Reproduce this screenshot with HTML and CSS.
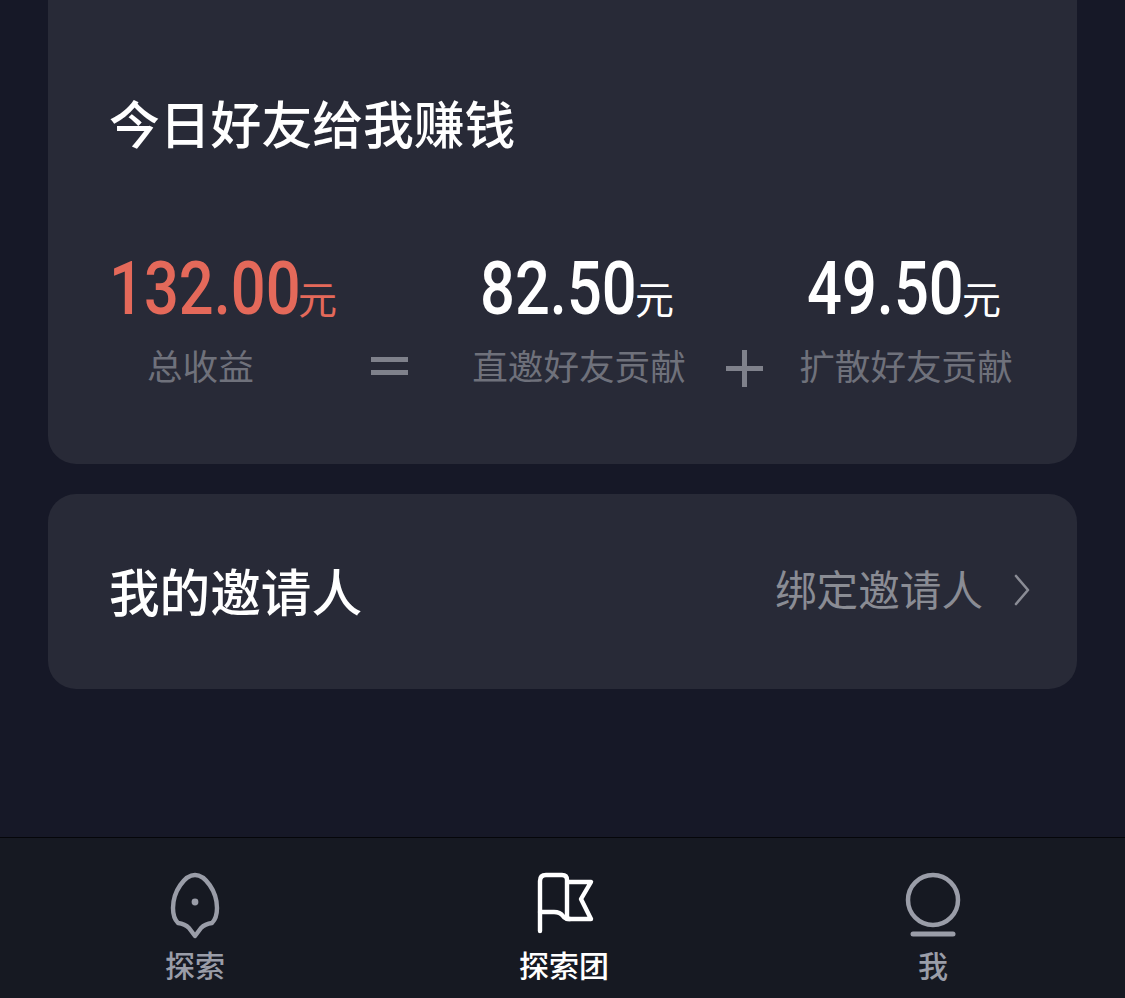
FILE: index.html
```html
<!DOCTYPE html>
<html lang="zh-CN">
<head>
    <meta charset="UTF-8">
    <meta name="viewport" content="width=device-width, initial-scale=1.0">
    <title>探索团</title>
    <link rel="stylesheet" href="styles.css">
</head>
<body>
    <div class="page">
        <div class="content">
            <!-- 今日收益 -->
            <section class="card earn">
                <h2 class="earn-title">今日好友给我赚钱</h2>
                <div class="stats">
                    <div class="stat stat-total">
                        <p class="money red"><span class="num num-long">132.00</span><span class="unit">元</span></p>
                        <p class="stat-label">总收益</p>
                    </div>
                    <div class="sign sign-eq"><i></i><i></i></div>
                    <div class="stat stat-direct">
                        <p class="money"><span class="num">82.50</span><span class="unit">元</span></p>
                        <p class="stat-label">直邀好友贡献</p>
                    </div>
                    <div class="sign sign-plus"></div>
                    <div class="stat stat-spread">
                        <p class="money"><span class="num">49.50</span><span class="unit">元</span></p>
                        <p class="stat-label">扩散好友贡献</p>
                    </div>
                </div>
            </section>
            <!-- 邀请人 -->
            <section class="card inviter">
                <h2 class="inviter-title">我的邀请人</h2>
                <div class="inviter-bind">
                    <span>绑定邀请人</span>
                    <svg class="arrow" width="16" height="32" viewBox="0 0 16 32" fill="none" stroke="#8a8c95" stroke-width="2.6" stroke-linecap="round" stroke-linejoin="round"><path d="M2 2 L14 16 L2 30"/></svg>
                </div>
            </section>
        </div>
        <!-- 底部导航 -->
        <nav class="tabbar">
            <a class="tab" href="#">
                <svg width="64" height="68" viewBox="0 0 64 68" fill="none" stroke="#9a9da8" stroke-width="4.4" stroke-linejoin="round"><path d="M32 4 C22 4 10 20 10 37 C10 44 12 49 15 52 Q22 53 26 57 L32 65 L38 57 Q42 53 49 52 C52 49 54 44 54 37 C54 20 42 4 32 4 Z"/><circle cx="32" cy="31" r="3.4" fill="#9a9da8" stroke="none"/></svg>
                <span>探索</span>
            </a>
            <a class="tab active" href="#">
                <svg width="64" height="68" viewBox="0 0 64 68" fill="none" stroke="#fff" stroke-width="4.4" stroke-linejoin="round" stroke-linecap="round"><path d="M8 60 V10 Q8 4 14 4 H30 Q35 4 35 9 V48 H59 L49 28 L59 11 H35"/><path d="M8 41 H22 Q28 41 31 45 Q33 48 38 48"/></svg>
                <span>探索团</span>
            </a>
            <a class="tab" href="#">
                <svg width="64" height="68" viewBox="0 0 64 68" fill="none" stroke="#9a9da8"><circle cx="32" cy="29" r="25" stroke-width="4.5"/><path d="M12 63 H52" stroke-width="5" stroke-linecap="round"/></svg>
                <span>我</span>
            </a>
        </nav>
    </div>
</body>
</html>
```

FILE: styles.css
```css
* {
    margin: 0;
    padding: 0;
    box-sizing: border-box;
}
html, body {
    height: 100%;
    overflow: hidden;
}
body {
    background-color: #161827;
    font-family: "Noto Sans CJK SC", "Noto Sans", sans-serif;
}
.page {
    display: flex;
    flex-direction: column;
    height: 998px;
}
.content {
    flex: 1;
    display: flex;
    flex-direction: column;
    gap: 30px;
    padding: 0 48px;
}
.card {
    background-color: #282a37;
    border-radius: 28px;
}
/* 今日收益 */
.earn {
    height: 464px;
    border-radius: 0 0 28px 28px;
    padding: 87px 0 0 61px;
}
.earn-title {
    font-size: 50.8px;
    line-height: 70px;
    font-weight: 500;
    color: #fff;
}
.stats {
    display: flex;
    margin-top: 97px;
}
.stat {
    display: flex;
    flex-direction: column;
}
.stat-total {
    width: 229px;
}
.stat-direct,
.stat-spread {
    width: 214px;
    align-items: center;
}
.stat-direct .money,
.stat-spread .money {
    margin-right: 4px;
}
.money {
    display: flex;
    align-items: baseline;
    color: #fff;
    white-space: nowrap;
    height: 70px;
}
.money.red {
    color: #e4695a;
}
/* 数字是窄体，没有对应字体，横向压一下 */
.num {
    display: inline-block;
    width: 155px;
    font-family: "Roboto", sans-serif;
    font-size: 74px;
    line-height: 70px;
    font-weight: 500;
    transform: scaleX(0.83);
    transform-origin: left;
}
.num-long {
    width: 189px;
}
.unit {
    font-size: 39px;
    line-height: 40px;
    font-weight: 400;
}
.stat-label {
    margin-top: 16px;
    font-size: 35.6px;
    line-height: 50px;
    color: #6f717b;
    white-space: nowrap;
}
.stat-total .stat-label {
    padding-left: 38px;
}
.sign {
    align-self: flex-end;
    height: 50px;
    display: flex;
    flex-direction: column;
    justify-content: center;
    align-items: center;
}
.sign-eq {
    width: 134px;
    gap: 8px;
    padding-right: 31px;
    margin-bottom: -1px;
}
.sign-eq i {
    display: block;
    width: 37px;
    height: 5px;
    background-color: #7f818b;
}
.sign-plus {
    width: 113px;
    margin-bottom: -3px;
    background:
        linear-gradient(#7f818b, #7f818b) 40px center / 37px 5px no-repeat,
        linear-gradient(#7f818b, #7f818b) 56px center / 5px 37px no-repeat;
}
/* 邀请人 */
.inviter {
    height: 195px;
    display: flex;
    align-items: center;
    justify-content: space-between;
    padding: 0 47px 4px 61px;
}
.inviter-title {
    font-size: 50.6px;
    font-weight: 500;
    color: #fff;
}
.inviter-bind {
    display: flex;
    align-items: center;
    gap: 31px;
    margin-bottom: 4px;
    font-size: 41.6px;
    color: #8a8c94;
}
.arrow {
    position: relative;
    top: 2px;
}
/* 底部导航 */
.tabbar {
    height: 161px;
    flex: none;
    display: flex;
    justify-content: center;
    padding: 33px 0 0 3px;
    background-color: #161922;
    border-top: 1px solid #05060a;
}
.tab {
    width: 369px;
    display: flex;
    flex-direction: column;
    align-items: center;
    text-decoration: none;
    font-size: 30px;
    line-height: 40px;
    font-weight: 500;
    color: #9a9da8;
}
.tab span {
    margin-top: 5px;
}
.tab.active {
    color: #fff;
}
```
